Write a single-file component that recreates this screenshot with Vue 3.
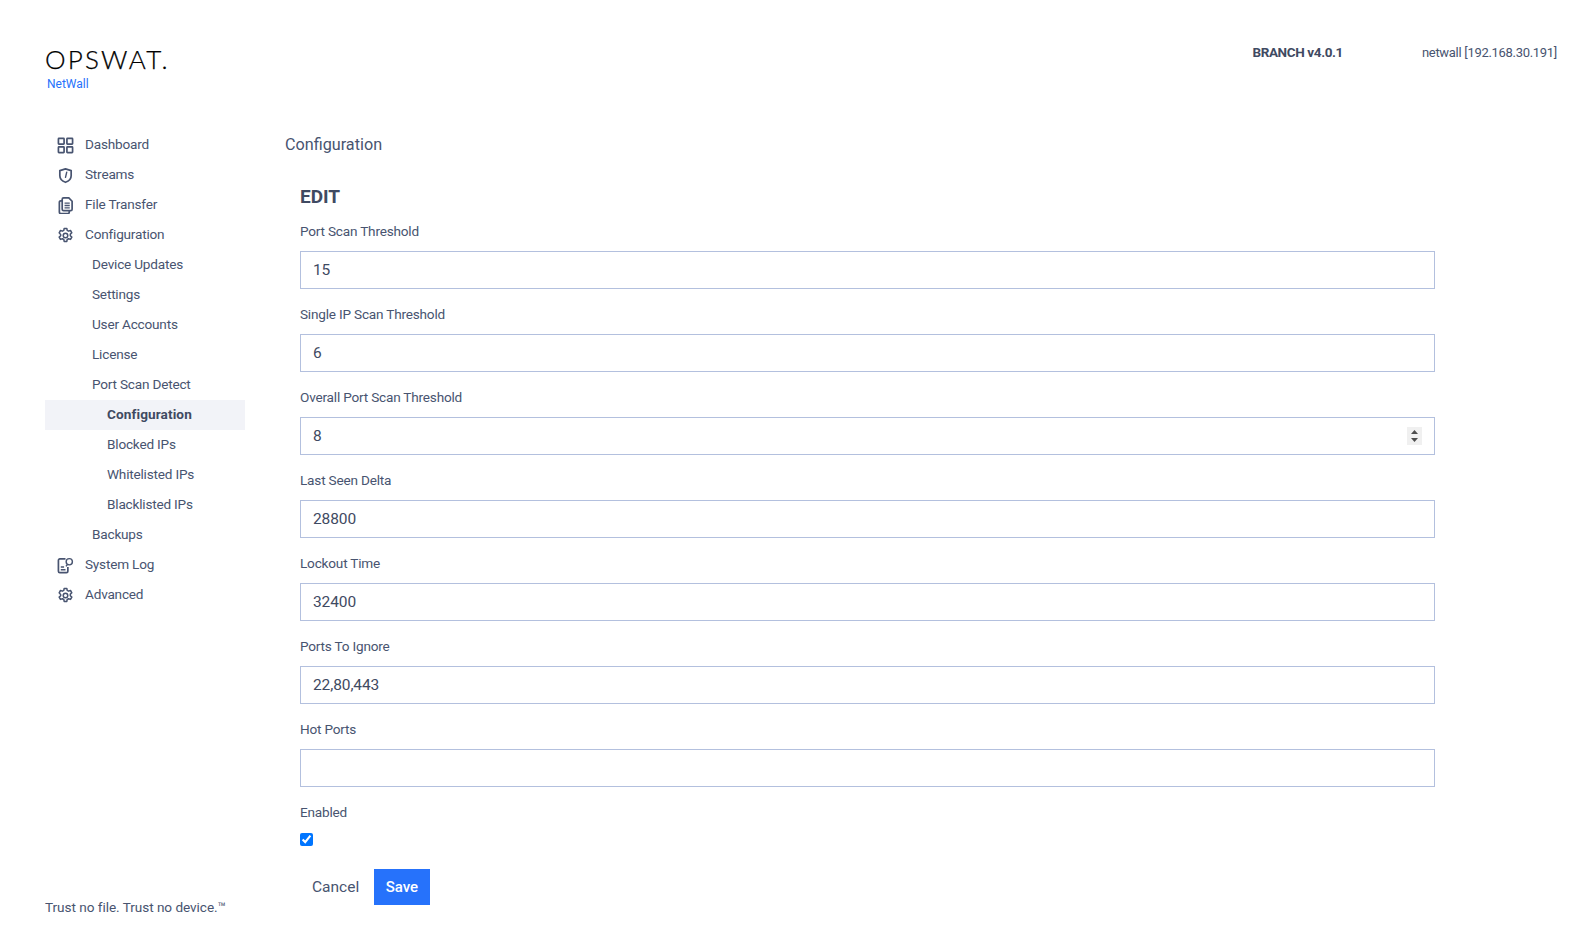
<script setup>
const fields = [
  { label: 'Port Scan Threshold', value: '15' },
  { label: 'Single IP Scan Threshold', value: '6' },
  { label: 'Overall Port Scan Threshold', value: '8', spin: true },
  { label: 'Last Seen Delta', value: '28800' },
  { label: 'Lockout Time', value: '32400' },
  { label: 'Ports To Ignore', value: '22,80,443' },
  { label: 'Hot Ports', value: '' }
]
const nav = [
  { label: 'Dashboard', icon: 'dash' },
  { label: 'Streams', icon: 'shield' },
  { label: 'File Transfer', icon: 'file' },
  { label: 'Configuration', icon: 'gear' },
  { label: 'Device Updates', level: 1 },
  { label: 'Settings', level: 1 },
  { label: 'User Accounts', level: 1 },
  { label: 'License', level: 1 },
  { label: 'Port Scan Detect', level: 1 },
  { label: 'Configuration', level: 2, active: true },
  { label: 'Blocked IPs', level: 2 },
  { label: 'Whitelisted IPs', level: 2 },
  { label: 'Blacklisted IPs', level: 2 },
  { label: 'Backups', level: 1 },
  { label: 'System Log', icon: 'log' },
  { label: 'Advanced', icon: 'gear' }
]
</script>

<template>
  <div class="page">
    <header class="top">
      <div class="brand">
        <div class="logo">OPSWAT.</div>
        <div class="product">NetWall</div>
      </div>
      <div class="meta">
        <span class="branch">BRANCH v4.0.1</span>
        <span class="host">netwall [192.168.30.191]</span>
      </div>
    </header>
    <div class="body">
      <aside class="side">
        <nav class="nav">
          <a v-for="(item, i) in nav" :key="i" class="item" :class="['lv' + (item.level || 0), { active: item.active }]">
            <svg v-if="item.icon" class="ico" viewBox="0 0 18 18" fill="none" stroke="#485470" stroke-width="1.8">
              <g v-if="item.icon === 'dash'">
                <rect x="1.5" y="1.5" width="6" height="6" rx=".6" />
                <rect x="10.5" y="1.5" width="6" height="6" rx=".6" />
                <rect x="1.5" y="10.5" width="6" height="6" rx=".6" />
                <rect x="10.5" y="10.5" width="6" height="6" rx=".6" />
              </g>
              <g v-else-if="item.icon === 'shield'">
                <path d="M9 2 15 3.800v5.400c0 3.400-2.600 5.800-6 7-3.400-1.200-6-3.600-6-7V3.800z" stroke-linejoin="round" />
                <path d="M10.300 5.500 9 11" stroke-linecap="round" stroke-width="1.500" />
              </g>
              <g v-else-if="item.icon === 'file'">
                <path d="M7 1h5.500L16 4.500V13a1.500 1.500 0 0 1-1.500 1.500H7A1.500 1.500 0 0 1 5.500 13V2.500A1.500 1.500 0 0 1 7 1z" />
                <path d="M5.500 4H4a1.500 1.500 0 0 0-1.500 1.500v10.500A1.500 1.500 0 0 0 4 17.500h7.500a1.500 1.500 0 0 0 1.500-1.500v-1.500" />
                <path d="M8 6.500h5.500M8 9h5.500M8 11.500h5.500" stroke-width="1.400" />
              </g>
              <g v-else-if="item.icon === 'gear'">
                <path d="M7.600 1.500h2.800l.4 2.100 1.500.8 2-.7 1.400 2.400-1.600 1.400v1.800l1.600 1.400-1.400 2.400-2-.7-1.500.8-.4 2.100H7.600l-.4-2.100-1.500-.8-2 .7-1.400-2.400 1.600-1.400V8.100L2.300 6.100l1.400-2.400 2 .7 1.500-.8z" stroke-linejoin="round" stroke-width="1.600" />
                <circle cx="9" cy="9" r="2.400" stroke-width="1.600" />
              </g>
              <g v-else>
                <path d="M9 2H3A1.500 1.500 0 0 0 1.500 3.500v11.500A1.500 1.500 0 0 0 3 16.500h7a1.500 1.500 0 0 0 1.500-1.500V10.500" />
                <circle cx="13" cy="5" r="3.300" stroke-width="1.500" />
                <path d="M10.800 8.200 9.500 10M4 10.500h3.500M4 13.500h5" stroke-width="1.500" />
              </g>
            </svg>
            <span class="text">{{ item.label }}</span>
          </a>
        </nav>
        <div class="tag">Trust no file. Trust no device.™</div>
      </aside>
      <main class="main">
        <div class="title">Configuration</div>
        <form class="form">
          <h2 class="edit">EDIT</h2>
          <div v-for="f in fields" :key="f.label" class="group">
            <label class="label">{{ f.label }}</label>
            <div class="control">
              <input class="input" type="text" :value="f.value" />
              <span v-if="f.spin" class="spin">
                <svg width="15" height="18" viewBox="0 0 15 18">
                  <path d="M7.500 3 11 7H4zM4 11h7L7.500 15z" fill="#4d4d4d" />
                </svg>
              </span>
            </div>
          </div>
          <label class="label">Enabled</label>
          <input class="check" type="checkbox" checked />
          <div class="actions">
            <button type="button" class="btn cancel">Cancel</button>
            <button type="button" class="btn save">Save</button>
          </div>
        </form>
      </main>
    </div>
  </div>
</template>

<style>
html, body { margin: 0; background: #fff; }
</style>

<style scoped>
.page {
  height: 933px;
  box-sizing: border-box;
  display: flex;
  flex-direction: column;
  font-family: Roboto, "Liberation Sans", sans-serif;
  font-size: 13.6px;
  letter-spacing: -0.2px;
  color: #485470;
  overflow: hidden;
}
.top {
  height: 130px;
  flex: none;
  display: flex;
  justify-content: space-between;
  padding: 0 22px 0 45px;
  box-sizing: border-box;
}
.brand { padding-top: 44px; }
.logo {
  font-family: Lato, sans-serif;
  font-weight: 300;
  font-size: 26px;
  line-height: 30px;
  letter-spacing: 2.2px;
  color: #000;
  -webkit-text-stroke: 0.25px #000;
}
.product {
  margin: 2px 0 0 2px;
  font-size: 12px;
  line-height: 16px;
  letter-spacing: 0;
  color: #2672fb;
}
.meta {
  display: flex;
  gap: 79px;
  padding-top: 42px;
  line-height: 20px;
}
.branch { font-size: 13.5px; letter-spacing: -0.38px; font-weight: 700; color: #3f4a62; }
.host { font-size: 13px; letter-spacing: -0.3px; margin-top: 1px; }
.body { flex: 1; display: flex; min-height: 0; }
.side {
  width: 200px;
  margin-left: 45px;
  padding-bottom: 16px;
  display: flex;
  flex-direction: column;
  justify-content: space-between;
  flex: none;
}
.nav { display: flex; flex-direction: column; }
.item {
  height: 30px;
  display: flex;
  align-items: center;
  gap: 11.5px;
  padding-left: 11px;
}
.text { padding-bottom: 2px; }
.ico { width: 17px; height: 17px; margin-left: 0.5px; flex: none; }
.lv1 { padding-left: 47px; }
.lv2 { padding-left: 62px; }
.active { background: #f2f3f8; font-weight: 700; letter-spacing: 0.1px; color: #3f4a62; }
.tag { line-height: 20px; letter-spacing: -0.05px; }
.main { margin-left: 40px; width: 1150px; flex: none; }
.title {
  margin-top: 3px;
  font-size: 16.2px;
  letter-spacing: 0;
  line-height: 24px;
}
.form { margin-top: 26px; padding-left: 15px; }
.edit {
  margin: 0;
  font-size: 19px;
  font-weight: 700;
  line-height: 28px;
  letter-spacing: 0;
  color: #3f4a62;
}
.group { margin-bottom: 16px; }
.edit + .group { margin-top: 11px; }
.label { display: block; line-height: 18px; margin-bottom: 11px; }
.control { position: relative; width: 1135px; }
.input {
  display: block;
  width: 100%;
  height: 38px;
  box-sizing: border-box;
  border: 1px solid #b3c0de;
  padding: 0 12px;
  font: 15.5px Roboto, sans-serif;
  letter-spacing: -0.1px;
  color: #3f4a62;
  background: #fff;
  outline: none;
}
.spin {
  position: absolute;
  right: 13px;
  top: 10px;
  width: 15px;
  height: 18px;
  background: #f0f0f0;
}
.spin svg { display: block; }
.check {
  display: block;
  width: 13px;
  height: 13px;
  margin: 12px 0 0;
  accent-color: #0075ff;
}
.actions { display: flex; margin-top: 23px; }
.btn {
  height: 36px;
  border: 0;
  padding: 0 12px;
  font: 15.5px Roboto, sans-serif;
  background: transparent;
  color: #485470;
}
.cancel { padding-right: 15px; }
.save { padding: 0 11.5px; font-size: 15px; background: #2672fb; color: #fff; font-weight: 500; }
</style>
